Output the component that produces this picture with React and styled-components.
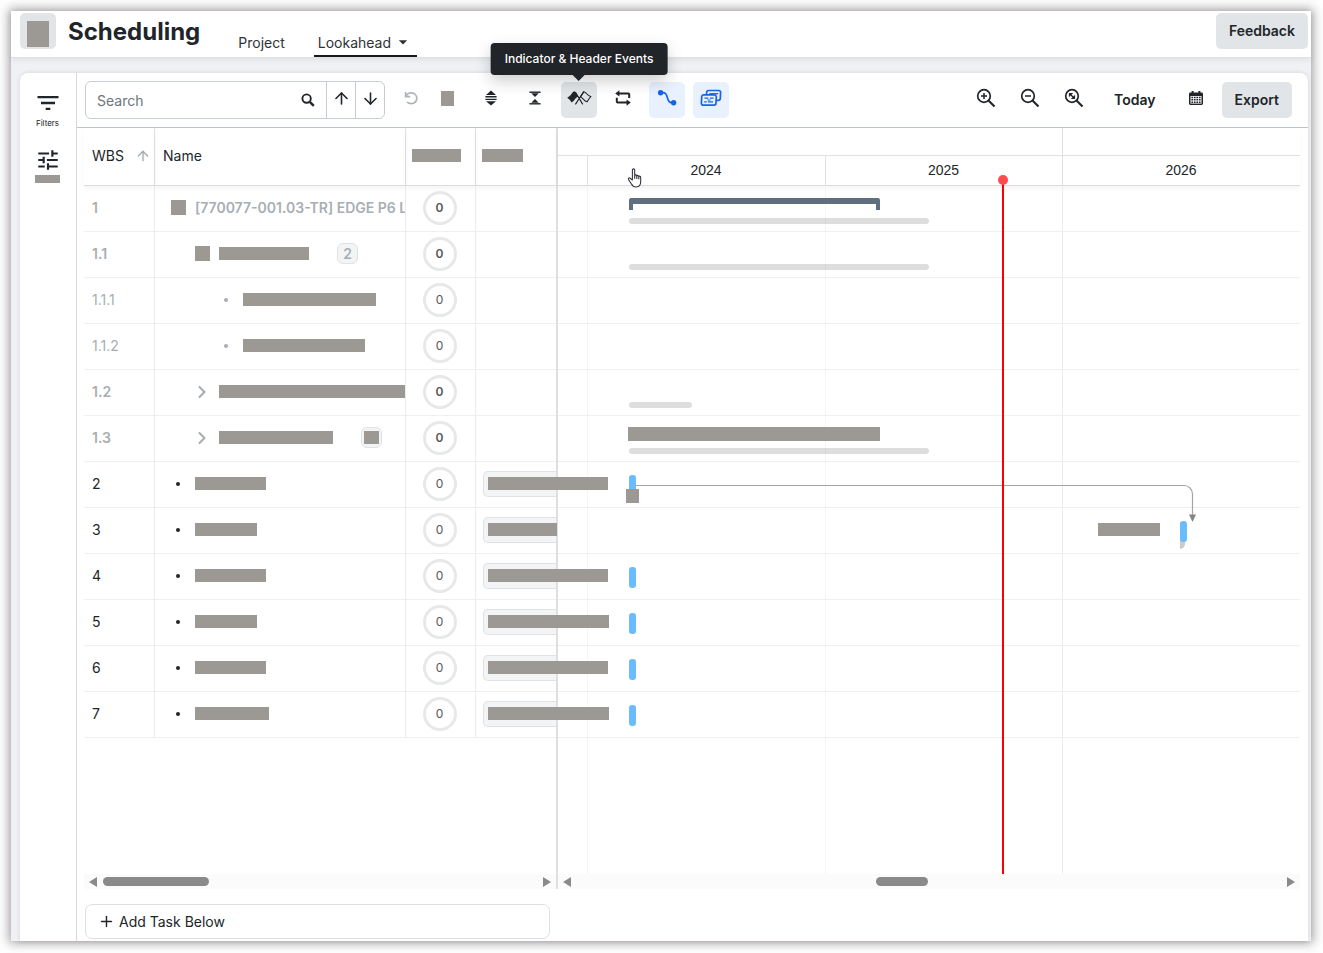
import React, { useState } from "react";
import styled, { createGlobalStyle, css } from "styled-components";
import { ArrowUp, ArrowDown, ChevronRight, Plus } from "lucide-react";
import { MdFilterList, MdTune, MdArrowDropDown } from "react-icons/md";

const tasks = [
  { id: "1", level: 0, kind: "group", title: "[770077-001.03-TR] EDGE P6 L", summary: [71, 251], baseline: [71, 300] },
  { id: "1.1", level: 1, kind: "group", bar: 90, count: "2", baseline: [71, 300] },
  { id: "1.1.1", level: 2, kind: "leaf", bar: 133, muted: true },
  { id: "1.1.2", level: 2, kind: "leaf", bar: 122, muted: true },
  { id: "1.2", level: 1, kind: "closed", bar: 187, baseline: [71, 63] },
  { id: "1.3", level: 1, kind: "closed", bar: 114, hiddenCount: true, masked: [70, 252], baseline: [71, 300] },
  { id: "2", level: 0, kind: "leaf", bar: 71, tag: 120, task: 71, note: 68 },
  { id: "3", level: 0, kind: "leaf", bar: 62, tag: 69, task: 622, label: [540, 62], progress: 622 },
  { id: "4", level: 0, kind: "leaf", bar: 71, tag: 120, task: 71 },
  { id: "5", level: 0, kind: "leaf", bar: 62, tag: 121, task: 71 },
  { id: "6", level: 0, kind: "leaf", bar: 71, tag: 120, task: 71 },
  { id: "7", level: 0, kind: "leaf", bar: 74, tag: 121, task: 71 },
];

const SearchIcon = () => (
  <svg width="14" height="14" viewBox="0 0 14 14" fill="none" stroke="currentColor">
    <circle cx="5.600" cy="5.600" r="4.200" strokeWidth="1.900" />
    <path d="m8.800 8.800 4 4" strokeWidth="2.400" />
  </svg>
);

const UndoIcon = () => (
  <svg width="16" height="16" viewBox="0 0 16 16" fill="none" stroke="currentColor" strokeWidth="1.7">
    <path d="M2.600 2v4.600h4.600" />
    <path d="M3 6.200C4.200 3.800 6.400 2.600 8.600 2.800c3 .2 5.200 2.600 5.200 5.400 0 3-2.400 5.400-5.400 5.400-2 0-3.400-.6-4.400-1.600" />
  </svg>
);

const ExpandIcon = () => (
  <svg width="16" height="16" viewBox="0 0 16 16" fill="currentColor">
    <path d="M8 .6 13 5H3z" />
    <path d="M2.400 6.100h11.200v1.300H2.400zM2.400 8.800h11.200v1.300H2.400z" />
    <path d="M8 15.600 3 11.200h10z" />
  </svg>
);

const CollapseIcon = () => (
  <svg width="16" height="16" viewBox="0 0 16 16" fill="currentColor">
    <path d="M2.400 1.500h11.200v1.400H2.400z" />
    <path d="M4.300 3.200h7.400L8 6.900z" />
    <path d="M8 9.100l3.700 3.700H4.300z" />
    <path d="M2.400 13.100h11.200v1.400H2.400z" />
  </svg>
);

const FlagsIcon = () => (
  <svg width="26" height="16" viewBox="0 0 26 16" fill="none" stroke="currentColor" strokeWidth="1.100">
    <path d="M8 1.200c1 .1 1.600.6 2 1.300l2.600 4.300c-1.600.2-2.600 1-3.500 2.200-1 1.400-2 2.700-3.600 3.400C4.600 10.500 3 8.900 1.200 7.800c1.600-.8 2.800-1.800 3.800-3.200C5.900 3.200 6.700 1.900 8 1.200z" fill="currentColor" stroke="none" />
    <path d="m9.400 2.200 7.400 12.200M17.800 1.600l-8.400 12.800" />
    <path d="M17.900 1.700c1.300.5 2.200 1.300 3.100 2.300 1 1.100 2.200 2 3.800 2.500-1.400 1.700-2.600 3.400-3.700 5.300-1.600-.4-2.600-1.300-3.600-2.400-.9-1-1.800-1.800-3.100-2.300z" />
  </svg>
);

const LoopIcon = () => (
  <svg width="18" height="16" viewBox="0 0 18 16" fill="none" stroke="currentColor" strokeWidth="2">
    <path d="M4 3.400h10.200a1 1 0 0 1 1 1V8M14 12.600H3.800a1 1 0 0 1-1-1V7.800" />
    <path d="M5.400.2v6.400L1.200 3.400zM12.600 9.400v6.400l4.200-3.200z" fill="currentColor" stroke="none" />
  </svg>
);

const LinkIcon = () => (
  <svg width="20" height="18" viewBox="0 0 20 18" fill="none" stroke="currentColor" strokeWidth="1.700">
    <path d="M4 3.700h2.200c6 0 2.400 10 8.400 10H16" />
    <circle cx="3.600" cy="3.800" r="2.700" fill="currentColor" stroke="none" />
    <circle cx="16.600" cy="13.700" r="2.700" fill="currentColor" stroke="none" />
  </svg>
);

const CardsIcon = () => (
  <svg width="22" height="18" viewBox="0 0 22 18" fill="none" stroke="currentColor" strokeWidth="1.700">
    <path d="M6.600 5.200V3.400a1.900 1.900 0 0 1 1.900-1.900h10.200a1.900 1.900 0 0 1 1.900 1.900l-.3 6.100a2 2 0 0 1-2 1.900h-1.700" />
    <path d="M9.400 4.700h8.800" strokeWidth="1.300" />
    <path d="M3.600 5.900h10.800a1.900 1.900 0 0 1 1.900 2l-.3 6.400a2 2 0 0 1-2 1.900H3.300a1.900 1.900 0 0 1-1.900-2l.3-6.400a2 2 0 0 1 1.900-1.900z" />
    <path d="M4.400 9.200h4M10 9.200h3.600M4.200 12.800h2.600M8 12.800h5M7.400 11h3.200" strokeWidth="1.200" />
  </svg>
);

const ZoomIcon = ({ children }) => (
  <svg width="20" height="20" viewBox="0 0 20 20" fill="none" stroke="currentColor" strokeWidth="1.700">
    <circle cx="8" cy="8" r="6.300" />
    <path d="m12.500 12.500 6 6" strokeWidth="2.100" />
    {children}
  </svg>
);

const CalendarIcon = () => (
  <svg width="16" height="16" viewBox="0 0 16 16" fill="currentColor">
    <path d="M3.600 1h2v1.600h4.800V1h2v1.600h1.200A1.400 1.400 0 0 1 15 4v9.600a1.400 1.400 0 0 1-1.400 1.400H2.400A1.400 1.400 0 0 1 1 13.600V4a1.400 1.400 0 0 1 1.400-1.400h1.200z" />
    <path d="M2.500 6h11v7.600h-11z" fill="#fff" />
    <path d="M3.400 6.800h1.700v1.500H3.400zM5.900 6.800h1.700v1.500H5.900zM8.400 6.800h1.700v1.500H8.400zM10.900 6.800h1.700v1.500h-1.700zM3.400 9.100h1.700v1.500H3.400zM5.900 9.100h1.700v1.500H5.900zM8.400 9.100h1.700v1.500H8.400zM10.900 9.100h1.700v1.500h-1.700zM3.400 11.400h1.700v1.500H3.400zM5.900 11.400h1.700v1.500H5.900zM8.400 11.400h1.700v1.500H8.400zM10.900 11.400h1.700v1.500h-1.700z" />
  </svg>
);

const HandCursor = () => (
  <svg width="16" height="20" viewBox="0 0 16 20" fill="#fff" stroke="#33343f" strokeWidth="1.100" strokeLinejoin="round">
    <path d="M5.400 12V2.300c0-1.900 2.300-1.900 2.300 0v5.200c.4-1 2-.8 2.100.4.500-.8 1.900-.6 2 .6.600-.6 1.900-.4 1.900.9v4.200c0 3.400-1.500 5.400-4.600 5.400-2.600 0-3.800-1.200-4.800-3.200L1.500 11.600c-.7-1.500 1-2.200 1.900-1.100z" />
    <path d="M7.700 7.500v3.300M9.800 8v3M11.800 8.600v2.600" fill="none" />
  </svg>
);

const ScrollRow = ({ start, size }) => (
  <ScrollTrack aria-hidden="true">
    <ScrollArrow $left />
    <ScrollRail>
      <ScrollThumb style={{ marginLeft: start, width: size }} />
    </ScrollRail>
    <ScrollArrow />
  </ScrollTrack>
);

const TaskRow = ({ task }) => {
  const parent = task.id.startsWith("1");
  const bold = parent && !task.muted;
  return (
    <tr>
      <Cell $faded={parent} $bold={bold}>{task.id}</Cell>
      <Cell $faded={parent} $bold={bold}>
        <NameLine $level={task.level}>
          <Marker>
            {task.kind === "group" && <Mask $w={15} $h={15} />}
            {task.kind === "leaf" && <Dot />}
            {task.kind === "closed" && <ChevronRight size={20} strokeWidth={2.5} />}
          </Marker>
          {task.title ? <span>{task.title}</span> : <Mask $w={task.bar} />}
          {task.count && <Badge>{task.count}</Badge>}
          {task.hiddenCount && (
            <Badge>
              <Mask $w={15} />
            </Badge>
          )}
        </NameLine>
      </Cell>
      <Cell $center>
        <Ring $bold={bold}>0</Ring>
      </Cell>
      <Cell $last>
        {task.tag && (
          <Tag>
            <Mask $w={task.tag} />
          </Tag>
        )}
      </Cell>
    </tr>
  );
};

const App = () => {
  const [search, setSearch] = useState("");

  return (
    <Frame>
      <GlobalStyle />
      <Header>
        <Logo>
          <Mask $w={22} $h={26} />
        </Logo>
        <Title>Scheduling</Title>
        <Tabs>
          <Tab href="#project">Project</Tab>
          <Tab href="#lookahead" $active>
            Lookahead
            <MdArrowDropDown size={20} />
          </Tab>
        </Tabs>
        <SolidButton>Feedback</SolidButton>
      </Header>

      <Body>
        <Panel>
          <Sidebar>
            <SideButton>
              <MdFilterList size={28} />
              Filters
            </SideButton>
            <SideButton aria-label="Settings">
              <MdTune size={26} />
              <Mask $w={25} $h={8} />
            </SideButton>
          </Sidebar>

          <Main>
            <Toolbar>
              <SearchGroup>
                <SearchInput
                  aria-label="Search"
                  placeholder="Search"
                  value={search}
                  onChange={(e) => setSearch(e.target.value)}
                />
                <SearchButton $wide aria-label="Run search">
                  <SearchIcon />
                </SearchButton>
                <SearchButton $divided aria-label="Previous">
                  <ArrowUp size={19} />
                </SearchButton>
                <SearchButton $divided aria-label="Next">
                  <ArrowDown size={19} />
                </SearchButton>
              </SearchGroup>
              <Tools>
                <ToolPair>
                  <ToolButton $disabled aria-label="Undo">
                    <UndoIcon />
                  </ToolButton>
                  <ToolButton aria-label="Redo">
                    <Mask $w={13} $h={15} />
                  </ToolButton>
                </ToolPair>
                <ToolButton aria-label="Expand all">
                  <ExpandIcon />
                </ToolButton>
                <ToolButton aria-label="Collapse all">
                  <CollapseIcon />
                </ToolButton>
                <ToolButton $tone="hover" aria-describedby="events-tip" aria-label="Events">
                  <FlagsIcon />
                  <Tooltip id="events-tip" role="tooltip">
                    Indicator &amp; Header Events
                  </Tooltip>
                </ToolButton>
                <ToolButton aria-label="Loop">
                  <LoopIcon />
                </ToolButton>
                <ToolButton $tone="on" aria-label="Dependencies">
                  <LinkIcon />
                </ToolButton>
                <ToolButton $tone="on" aria-label="Labels">
                  <CardsIcon />
                </ToolButton>
              </Tools>
              <Tools $end>
                <ToolButton aria-label="Zoom in">
                  <ZoomIcon>
                    <path d="M8 5v6M5 8h6" strokeWidth="1.500" />
                  </ZoomIcon>
                </ToolButton>
                <ToolButton aria-label="Zoom out">
                  <ZoomIcon>
                    <path d="M5 8h6" strokeWidth="1.500" />
                  </ZoomIcon>
                </ToolButton>
                <ToolButton aria-label="Zoom to fit">
                  <ZoomIcon>
                    <path d="M4.900 4.900h4.300L4.900 9.200zM11.100 11.100H6.800l4.300-4.300z" fill="currentColor" stroke="none" />
                    <path d="m6 6 4 4" strokeWidth="1.400" />
                  </ZoomIcon>
                </ToolButton>
                <TextButton>Today</TextButton>
                <ToolButton aria-label="Pick a date">
                  <CalendarIcon />
                </ToolButton>
                <SolidButton>Export</SolidButton>
              </Tools>
            </Toolbar>

            <Gantt>
              <GridPane>
                <Grid>
                  <colgroup>
                    <col width="71" />
                    <col width="251" />
                    <col width="70" />
                    <col />
                  </colgroup>
                  <thead>
                    <tr>
                      <HeadCell>
                        <HeadLine>
                          WBS
                          <ArrowUp size={16} color="#a3a9ad" />
                        </HeadLine>
                      </HeadCell>
                      <HeadCell>Name</HeadCell>
                      <HeadCell $tight>
                        <Mask $w={49} />
                      </HeadCell>
                      <HeadCell $tight $last>
                        <Mask $w={41} />
                      </HeadCell>
                    </tr>
                  </thead>
                  <tbody>
                    {tasks.map((task) => (
                      <TaskRow key={task.id} task={task} />
                    ))}
                  </tbody>
                </Grid>
                <Filler />
                <ScrollRow start={0} size={106} />
              </GridPane>

              <ChartPane>
                <ChartHead>
                  <YearRow>
                    <Year $w={504} />
                    <Year />
                  </YearRow>
                  <YearRow>
                    <Year $w={29} />
                    <Year $w={238}>2024</Year>
                    <Year $w={237}>2025</Year>
                    <Year>2026</Year>
                  </YearRow>
                </ChartHead>
                <Chart>
                  {tasks.map((task) => (
                    <Track key={task.id}>
                      {task.summary && (
                        <Summary style={{ left: task.summary[0], width: task.summary[1] }} />
                      )}
                      {task.masked && (
                        <MaskedBar style={{ left: task.masked[0], width: task.masked[1] }} />
                      )}
                      {task.baseline && (
                        <Baseline style={{ left: task.baseline[0], width: task.baseline[1] }} />
                      )}
                      {task.progress && <Progress style={{ left: task.progress }} />}
                      {task.task && <TaskBar style={{ left: task.task }} />}
                      {task.note && <Note style={{ left: task.note }} />}
                      {task.label && (
                        <Label style={{ left: task.label[0], width: task.label[1] }} />
                      )}
                    </Track>
                  ))}
                  <Link width="640" height="352" viewBox="0 0 640 352" fill="none">
                    <path d="M78 299.500h548a8.500 8.500 0 0 1 8.500 8.500v22" stroke="#a5a5a5" strokeWidth="1.200" />
                    <path d="M631 328.500h7l-3.500 7.500z" fill="#858585" />
                  </Link>
                  <TodayLine />
                </Chart>
                <ScrollRow start={299} size={52} />
                <Pointer>
                  <HandCursor />
                </Pointer>
              </ChartPane>
            </Gantt>

            <AddTask>
              <Plus size={17} />
              Add Task Below
            </AddTask>
          </Main>
        </Panel>
      </Body>
    </Frame>
  );
};

export default App;

const GlobalStyle = createGlobalStyle`
  * {
    box-sizing: border-box;
  }
  body {
    margin: 0;
    background: #fff;
    color: #212529;
    font-family: Inter, "Liberation Sans", sans-serif;
    font-size: 14px;
  }
  button, input {
    font: inherit;
    color: inherit;
  }
  svg {
    flex: none;
  }
`;

const Frame = styled.div`
  display: flex;
  flex-direction: column;
  min-height: calc(100vh - 23px);
  margin: 11px 12px 12px 11px;
  background: #eff1f4;
  box-shadow: 0 0 10px 2px rgba(70, 58, 64, 0.5);
`;

const Mask = styled.span`
  display: block;
  flex: none;
  width: ${(props) => props.$w}px;
  height: ${(props) => props.$h || 13}px;
  background: #9c9894;
`;

const Header = styled.header`
  display: flex;
  align-items: flex-start;
  height: 47px;
  padding: 2px 3px 0 9px;
  background: #fff;
  border-bottom: 1px solid #dfe2e5;
  box-shadow: 0 2px 6px rgba(0, 0, 0, 0.07);
`;

const Logo = styled.div`
  display: flex;
  align-items: flex-end;
  justify-content: center;
  width: 36px;
  height: 36px;
  padding-bottom: 2px;
  border-radius: 5px;
  background: #e1e5e8;
`;

const Title = styled.h1`
  margin: 0 0 0 12px;
  font-size: 24px;
  font-weight: 700;
  line-height: 38px;
`;

const Tabs = styled.nav`
  display: flex;
  flex: 1;
  gap: 25px;
  margin-left: 34px;
`;

const Tab = styled.a`
  display: flex;
  align-items: center;
  height: 44px;
  padding: 16px 4px 0;
  border-bottom: 2px solid ${(props) => (props.$active ? "#17191c" : "transparent")};
  color: #2f3337;
  text-decoration: none;

  svg {
    margin-left: 2px;
  }
`;

const SolidButton = styled.button`
  height: 36px;
  padding: 0 13px 1px;
  border: 0;
  border-radius: 5px;
  background: #e1e5e8;
  font-weight: 600;
`;

const Body = styled.div`
  display: flex;
  flex: 1;
  padding: 15px 3px 0 9px;
`;

const Panel = styled.div`
  display: flex;
  flex: 1;
  min-width: 0;
  background: #fff;
  border-radius: 8px 8px 0 0;
  box-shadow: 0 0 4px rgba(40, 50, 60, 0.14);
`;

const Sidebar = styled.aside`
  display: flex;
  flex-direction: column;
  gap: 18px;
  width: 57px;
  padding: 16px 1px 0 0;
  border-right: 1px solid #d3d9dc;
`;

const SideButton = styled.button`
  display: flex;
  flex-direction: column;
  align-items: center;
  padding: 0;
  border: 0;
  background: none;
  font-size: 8px;
  line-height: 12px;

  ${Mask} {
    margin-top: 2px;
  }
`;

const Main = styled.main`
  display: flex;
  flex: 1;
  flex-direction: column;
  min-width: 0;
`;

const Toolbar = styled.div`
  display: flex;
  align-items: flex-start;
  height: 55px;
  padding: 8px 16px 0 8px;
  border-bottom: 1px solid #bcc4c6;
`;

const SearchGroup = styled.div`
  display: flex;
  width: 300px;
  height: 38px;
  border: 1px solid #c5cdd1;
  border-radius: 6px;
`;

const SearchInput = styled.input`
  flex: 1;
  min-width: 0;
  padding: 0 11px;
  border: 0;
  background: none;

  &::placeholder {
    color: #6c757d;
    opacity: 1;
  }
`;

const SearchButton = styled.button`
  display: flex;
  align-items: center;
  justify-content: center;
  width: ${(props) => (props.$wide ? 36 : 29)}px;
  padding: 0;
  border: 0;
  background: none;
  ${(props) =>
    props.$divided &&
    css`
      padding-bottom: 4px;
      border-left: 1px solid #c5cdd1;
    `}
`;

const Tools = styled.div`
  display: flex;
  gap: 8px;
  margin-left: ${(props) => (props.$end ? "auto" : "8px")};
  padding-top: 1px;
`;

const ToolPair = styled.div`
  display: flex;
`;

const tones = { hover: "#e1e5e8", on: "#e9f1fe" };

const ToolButton = styled.button`
  position: relative;
  display: flex;
  align-items: center;
  justify-content: center;
  width: 36px;
  height: 36px;
  padding: 0 0 4px;
  border: 0;
  border-radius: 5px;
  background: ${(props) => tones[props.$tone] || "none"};
  color: ${(props) => (props.$tone === "on" ? "#1765e5" : props.$disabled ? "#adb3b8" : "#212529")};
`;

const TextButton = styled.button`
  height: 36px;
  padding: 0 14px 1px;
  border: 0;
  background: none;
  font-weight: 600;
`;

const Tooltip = styled.span`
  position: absolute;
  bottom: calc(100% + 7px);
  left: 50%;
  z-index: 3;
  padding: 0 14px;
  border-radius: 4px;
  background: #212529;
  box-shadow: 0 6px 16px rgba(0, 0, 0, 0.2);
  color: #fff;
  font-size: 12px;
  font-weight: 500;
  line-height: 32px;
  white-space: nowrap;
  transform: translateX(-50%);

  &::after {
    content: "";
    position: absolute;
    top: 100%;
    left: 50%;
    margin-left: -6px;
    border: 6px solid transparent;
    border-top-color: #212529;
    border-bottom: 0;
  }
`;

const Gantt = styled.div`
  display: flex;
  flex: 1;
  padding: 0 8px 0 7px;
`;

const GridPane = styled.div`
  position: relative;
  z-index: 1;
  display: flex;
  flex-direction: column;
  width: 474px;
  border-right: 2px solid #dfdfdf;
`;

const Grid = styled.table`
  width: 100%;
  table-layout: fixed;
  border-spacing: 0;
`;

const HeadCell = styled.th`
  height: 58px;
  padding: 0 0 2px ${(props) => (props.$tight ? 6 : 8)}px;
  border-right: ${(props) => (props.$last ? 0 : 1)}px solid #dfe1e2;
  border-bottom: 1px solid #dadcdd;
  box-shadow: 0 3px 4px rgba(0, 0, 0, 0.04);
  font-weight: 400;
  text-align: left;
`;

const HeadLine = styled.div`
  display: flex;
  align-items: center;
  justify-content: space-between;
  padding-right: 3px;
`;

const Cell = styled.td`
  height: 46px;
  padding: 0 0 2px 7px;
  border-right: ${(props) => (props.$last ? 0 : 1)}px solid #e9ebec;
  border-bottom: 1px solid #eff0f1;
  overflow: ${(props) => (props.$last ? "visible" : "hidden")};
  color: ${(props) => (props.$faded ? "#a7aeb3" : "#212529")};
  font-weight: ${(props) => (props.$bold ? 600 : 400)};
  white-space: nowrap;

  &:first-child {
    padding-left: 8px;
  }
  ${(props) =>
    props.$center &&
    css`
      padding: 0 2px 2px 0;
    `}
`;

const NameLine = styled.div`
  display: flex;
  align-items: center;
  padding-left: ${(props) => 9 + props.$level * 24}px;
`;

const Marker = styled.span`
  display: flex;
  align-items: center;
  justify-content: center;
  width: 14px;
  margin-right: 10px;
`;

const Dot = styled.i`
  width: 4px;
  height: 4px;
  border-radius: 50%;
  background: currentColor;
`;

const Badge = styled.span`
  display: flex;
  align-items: center;
  justify-content: center;
  width: 21px;
  height: 21px;
  margin-left: 28px;
  border: 1px solid #dfe2e4;
  border-radius: 6px;
  background: #f3f4f6;
`;

const Ring = styled.div`
  width: 34px;
  margin: 0 auto;
  border: 3px solid #e6e8e9;
  border-radius: 50%;
  color: #55595d;
  font-size: 12px;
  font-weight: ${(props) => (props.$bold ? 600 : 400)};
  line-height: 28px;
  text-align: center;
`;

const Tag = styled.div`
  display: flex;
  align-items: center;
  height: 26px;
  padding-left: 4px;
  border: 1px solid #dfe2e4;
  border-right: 0;
  border-radius: 5px 0 0 5px;
  background: #f3f4f6;
`;

const Filler = styled.div`
  flex: 1;
`;

const ScrollTrack = styled.div`
  display: flex;
  align-items: center;
  height: 15px;
  padding: 0 5px;
  background: #fbfbfb;
`;

const ScrollArrow = styled.i`
  border: 5px solid transparent;
  ${(props) =>
    props.$left
      ? css`
          border-left: 0;
          border-right: 8px solid #8a8a8a;
        `
      : css`
          border-right: 0;
          border-left: 8px solid #8a8a8a;
        `}
`;

const ScrollRail = styled.div`
  flex: 1;
  padding: 0 6px;
`;

const ScrollThumb = styled.div`
  height: 9px;
  border-radius: 5px;
  background: #8a8a8a;
`;

const ChartPane = styled.div`
  position: relative;
  display: flex;
  flex: 1;
  flex-direction: column;
  min-width: 0;
`;

const ChartHead = styled.div`
  border-bottom: 1px solid #dadcdd;
  box-shadow: 0 3px 4px rgba(0, 0, 0, 0.04);
`;

const YearRow = styled.div`
  display: flex;
  height: 27px;

  & + & {
    height: 30px;
    border-top: 1px solid #dfe1e2;
  }
`;

const Year = styled.div`
  flex: ${(props) => (props.$w ? "none" : 1)};
  width: ${(props) => (props.$w ? `${props.$w + 1}px` : "auto")};
  border-right: ${(props) => (props.$w ? 1 : 0)}px solid #dfe1e2;
  margin-right: ${(props) => (props.$w ? -1 : 0)}px;
  font-family: "Liberation Sans", sans-serif;
  line-height: 28px;
  text-align: center;
`;

const Chart = styled.div`
  position: relative;
  flex: 1;
  background:
    linear-gradient(#f5f5f6, #f5f5f6) 29px 0 / 1px 100% no-repeat,
    linear-gradient(#f5f5f6, #f5f5f6) 267px 0 / 1px 100% no-repeat,
    linear-gradient(#ececee, #ececee) 504px 0 / 1px 100% no-repeat;
`;

const Track = styled.div`
  position: relative;
  height: 46px;
  border-bottom: 1px solid #eff0f1;
`;

const Bar = styled.div`
  position: absolute;
`;

const Summary = styled(Bar)`
  top: 12px;
  height: 12px;
  border: 4px solid #5f6f80;
  border-top-width: 6px;
  border-bottom: 0;
  border-radius: 3px 3px 0 0;
`;

const MaskedBar = styled(Bar)`
  top: 11px;
  height: 14px;
  background: #9c9894;
`;

const Baseline = styled(Bar)`
  top: 32px;
  height: 6px;
  border-radius: 3px;
  background: rgba(0, 0, 0, 0.135);
`;

const TaskBar = styled(Bar)`
  top: 13px;
  width: 7px;
  height: 21px;
  border-radius: 3px;
  background: #6bbcff;
`;

const Progress = styled(Bar)`
  top: 30px;
  width: 5px;
  height: 11px;
  border-radius: 0 4px 5px 0;
  background: #cbcbcb;
`;

const Note = styled(Bar)`
  top: 27px;
  z-index: 1;
  width: 13px;
  height: 14px;
  background: #9c9894;
`;

const Label = styled(Bar)`
  top: 15px;
  height: 13px;
  background: #9c9894;
`;

const Link = styled.svg`
  position: absolute;
  top: 0;
  left: 0;
`;

const TodayLine = styled.div`
  position: absolute;
  top: -6px;
  bottom: 0;
  left: 444px;
  width: 2px;
  background: #ff0000;

  &::before {
    content: "";
    position: absolute;
    top: -5px;
    left: -4px;
    width: 10px;
    height: 10px;
    border-radius: 50%;
    background: #ff4a4e;
  }
`;

const Pointer = styled.div`
  position: absolute;
  top: 40px;
  left: 69px;
`;

const AddTask = styled.button`
  display: flex;
  align-items: center;
  gap: 4px;
  width: 465px;
  height: 35px;
  margin: 15px 0 2px 8px;
  padding: 0 12px;
  border: 1px solid #dde0e2;
  border-radius: 7px;
  background: #fff;
`;
